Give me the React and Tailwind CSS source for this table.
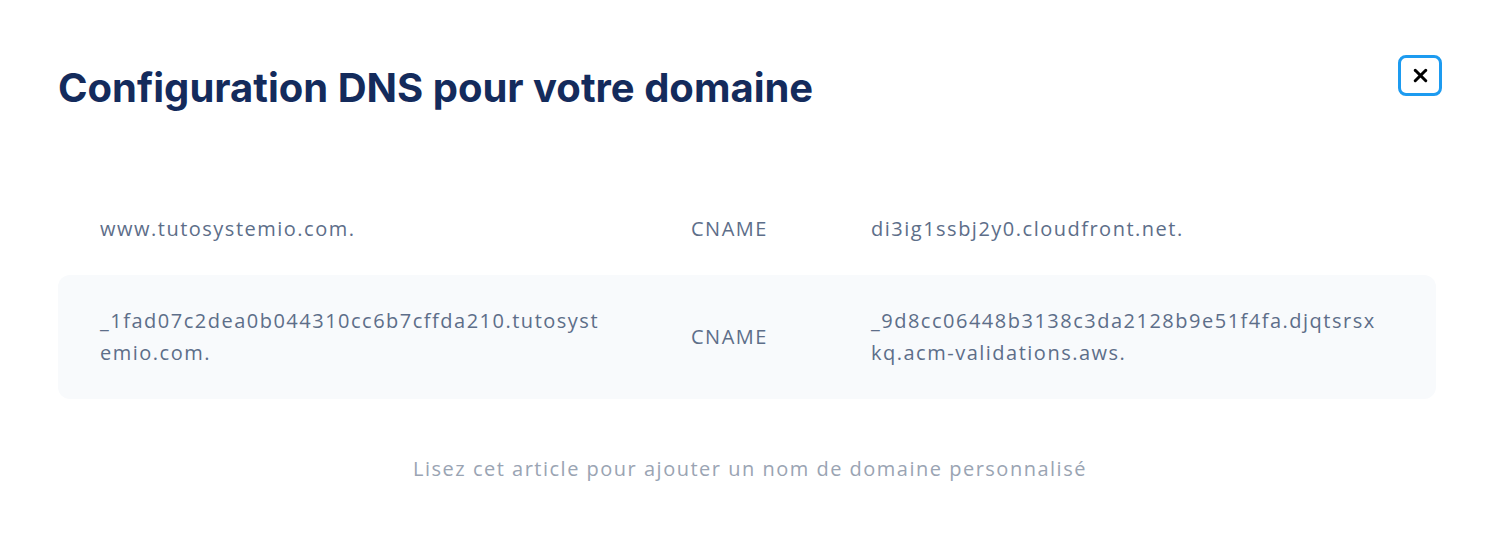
import { X } from "lucide-react";

const records = [
  { name: "www.tutosystemio.com.", type: "CNAME", value: "di3ig1ssbj2y0.cloudfront.net." },
  {
    name: "_1fad07c2dea0b044310cc6b7cffda210.tutosystemio.com.",
    type: "CNAME",
    value: "_9d8cc06448b3138c3da2128b9e51f4fa.djqtsrsxkq.acm-validations.aws.",
  },
];

export default function App() {
  return (
    <div className="w-full min-h-[552px] bg-white px-[58px] pt-[60px] font-['Open_Sans',sans-serif]">
      {/* Header */}
      <div className="flex items-start justify-between">
        <h1 className="mt-[4px] font-['Inter',sans-serif] text-[40px] font-bold leading-[48px] text-[#142b5c]">
          Configuration DNS pour votre domaine
        </h1>
        <button className="-mt-[5px] flex h-[41px] w-[44px] items-center justify-center rounded-lg border-[3px] border-[#1d9bf0] bg-white">
          <X size={21} strokeWidth={3.5} className="text-black" />
        </button>
      </div>

      {/* Records */}
      <div className="mt-[71px] mr-[6px]">
        {records.map((r, i) => (
          <div
            key={i}
            className={`grid grid-cols-[591px_180px_1fr] items-center rounded-xl py-[30px] text-[20px] leading-[32px] tracking-[1.5px] text-[#5d6e89] ${
              i % 2 === 1 ? "bg-[#f8fafc]" : ""
            }`}
          >
            <div className="break-all pl-[42px] pr-[48px]">{r.name}</div>
            <div className="pl-[42px]">{r.type}</div>
            <div className="break-all pl-[42px] pr-[57px]">{r.value}</div>
          </div>
        ))}
      </div>

      <p className="mt-[54px] text-center text-[20px] leading-[32px] tracking-[1.5px] text-[#9aa4b3]">
        Lisez cet article pour ajouter un nom de domaine personnalisé
      </p>
    </div>
  );
}
